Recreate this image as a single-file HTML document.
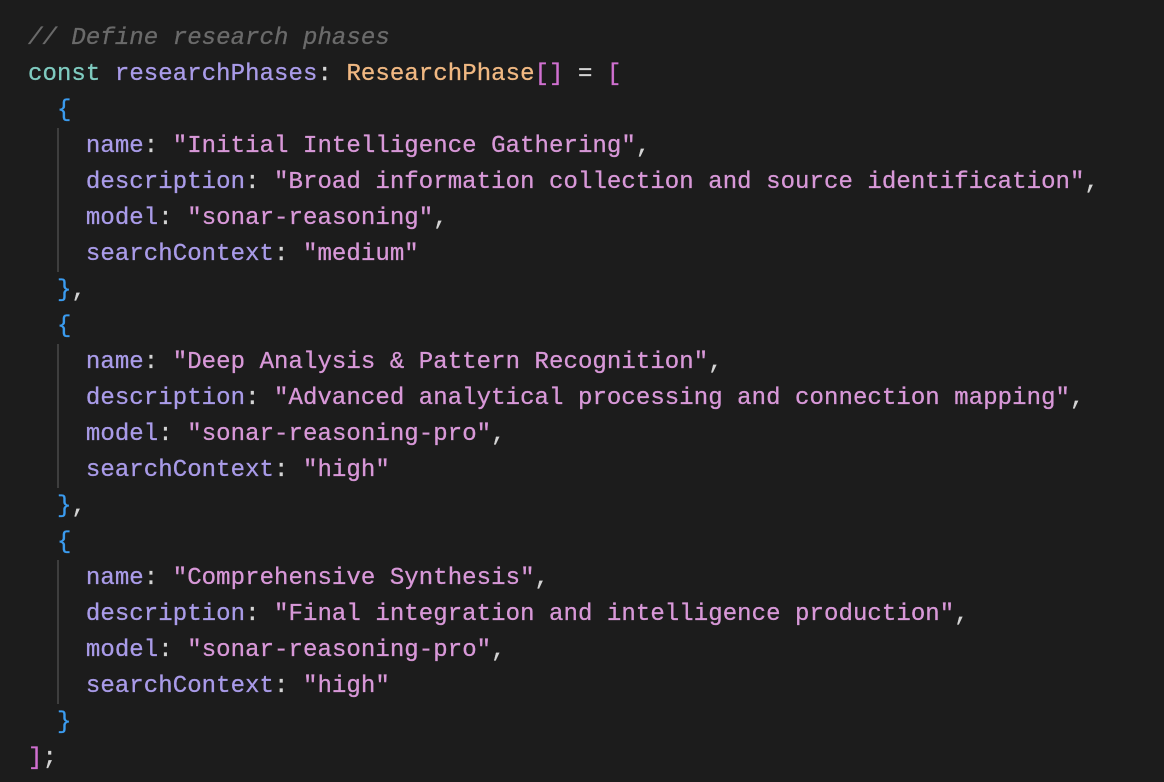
<!DOCTYPE html>
<html><head><meta charset="utf-8"><style>
html,body{margin:0;padding:0;background:#1c1c1c;width:1164px;height:782px;overflow:hidden}
pre{margin:0;position:absolute;left:28px;top:21px;font-family:"Liberation Mono",monospace;font-size:24px;letter-spacing:0.07px;line-height:36px;color:#d4d4d4;-webkit-text-stroke:0.3px currentColor}
.c{color:#6a6a6a;font-style:italic}.k{color:#7fcbc0}.v{color:#a99be8}.t{color:#f0b882}.s{color:#d898d8}.b{color:#3b9cf0}.p{color:#d070d0}
.g{position:absolute;left:57px;width:2px;background:#3e3e3e;height:144px}
</style></head><body>
<div class="g" style="top:128px"></div><div class="g" style="top:344px"></div><div class="g" style="top:560px"></div>
<pre><span class="c">// Define research phases</span>
<span class="k">const</span> <span class="v">researchPhases</span>: <span class="t">ResearchPhase</span><span class="p">[]</span> = <span class="p">[</span>
  <span class="b">{</span>
    <span class="v">name</span>: <span class="s">"Initial Intelligence Gathering"</span>,
    <span class="v">description</span>: <span class="s">"Broad information collection and source identification"</span>,
    <span class="v">model</span>: <span class="s">"sonar-reasoning"</span>,
    <span class="v">searchContext</span>: <span class="s">"medium"</span>
  <span class="b">}</span>,
  <span class="b">{</span>
    <span class="v">name</span>: <span class="s">"Deep Analysis &amp; Pattern Recognition"</span>,
    <span class="v">description</span>: <span class="s">"Advanced analytical processing and connection mapping"</span>,
    <span class="v">model</span>: <span class="s">"sonar-reasoning-pro"</span>,
    <span class="v">searchContext</span>: <span class="s">"high"</span>
  <span class="b">}</span>,
  <span class="b">{</span>
    <span class="v">name</span>: <span class="s">"Comprehensive Synthesis"</span>,
    <span class="v">description</span>: <span class="s">"Final integration and intelligence production"</span>,
    <span class="v">model</span>: <span class="s">"sonar-reasoning-pro"</span>,
    <span class="v">searchContext</span>: <span class="s">"high"</span>
  <span class="b">}</span>
<span class="p">]</span>;</pre>
</body></html>
